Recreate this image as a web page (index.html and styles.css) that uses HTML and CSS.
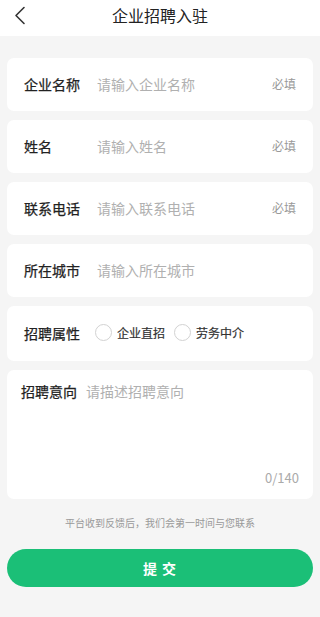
FILE: index.html
```html
<!DOCTYPE html>
<html lang="zh-CN">
<head>
<meta charset="utf-8">
<meta name="viewport" content="width=device-width, initial-scale=1">
<title>企业招聘入驻</title>
<link rel="stylesheet" href="styles.css">
</head>
<body>
<header class="topbar">
  <span class="back">
    <svg width="12" height="19" viewBox="0 0 12 19"><path d="M10 1.5 L2 9.5 L10 17.5" fill="none" stroke="#333" stroke-width="1.6" stroke-linecap="round" stroke-linejoin="round"/></svg>
  </span>
  <h1 class="title">企业招聘入驻</h1>
  <span></span>
</header>
<main class="form">
  <div class="card row">
    <span class="label">企业名称</span>
    <input class="field" placeholder="请输入企业名称">
    <span class="req">必填</span>
  </div>
  <div class="card row">
    <span class="label">姓名</span>
    <input class="field" placeholder="请输入姓名">
    <span class="req">必填</span>
  </div>
  <div class="card row">
    <span class="label">联系电话</span>
    <input class="field" placeholder="请输入联系电话">
    <span class="req">必填</span>
  </div>
  <div class="card row">
    <span class="label">所在城市</span>
    <input class="field" placeholder="请输入所在城市">
  </div>
  <div class="card row radio-row">
    <span class="label label-radio">招聘属性</span>
    <label class="opt"><span class="circle"></span><span>企业直招</span></label>
    <label class="opt"><span class="circle"></span><span>劳务中介</span></label>
  </div>
  <div class="card area">
    <div class="area-top">
      <span class="label">招聘意向</span>
      <span class="ph">请描述招聘意向</span>
    </div>
    <div class="count">0/140</div>
  </div>
  <p class="note">平台收到反馈后，我们会第一时间与您联系</p>
  <button class="submit">提 交</button>
</main>
</body>
</html>
```
FILE: styles.css
```css
* { box-sizing: border-box; }
html, body { margin: 0; padding: 0; }
body {
  width: 320px;
  min-height: 617px;
  background: #f5f5f5;
  font-family: "Noto Sans CJK SC", "Noto Sans", sans-serif;
  color: #333;
}
.topbar {
  height: 36px;
  background: #fff;
  display: grid;
  grid-template-columns: 40px 1fr 40px;
  align-items: center;
}
.back {
  display: flex;
  align-items: center;
  padding-left: 14px;
  height: 36px;
}
.back svg { display: block; margin-top: -5px; }
.title {
  margin: 0;
  text-align: center;
  font-size: 16px;
  font-weight: 400;
  color: #222;
  line-height: 20px;
  margin-top: -6px;
}
.form {
  padding: 22px 7px 0;
  display: flex;
  flex-direction: column;
  gap: 9px;
}
.card {
  background: #fff;
  border-radius: 7px;
}
.row {
  height: 53px;
  display: flex;
  align-items: center;
  padding: 0 17px 2px;
}
.label {
  width: 73px;
  flex: none;
  font-size: 14px;
  font-weight: 400;
  color: #222;
  line-height: 20px;
  -webkit-text-stroke: 0.25px #222;
}
.field {
  flex: 1;
  min-width: 0;
  border: 0;
  outline: 0;
  padding: 0;
  background: transparent;
  font: inherit;
  font-size: 14px;
  line-height: 20px;
  color: #333;
}
.field::placeholder { color: #b0b0b0; }
.req {
  font-size: 12px;
  color: #999;
  flex: none;
}
.radio-row { height: 55px; }
.label-radio { width: 71px; }
.opt {
  display: flex;
  align-items: center;
  gap: 5px;
  font-size: 12px;
  font-weight: 400;
  color: #333;
  margin-right: 9px;
  -webkit-text-stroke: 0.2px #333;
}
.circle {
  width: 17px;
  height: 17px;
  border: 1px solid #d2d2d2;
  border-radius: 50%;
  display: block;
}
.area {
  height: 129px;
  padding: 11px 14px 13px 14px;
  display: flex;
  flex-direction: column;
  justify-content: space-between;
}
.area-top {
  display: flex;
  align-items: center;
  gap: 9px;
}
.area .label { width: auto; }
.ph {
  font-size: 14px;
  color: #b0b0b0;
  line-height: 20px;
}
.count {
  text-align: right;
  font-size: 13px;
  color: #aaa;
  line-height: 16px;
}
.note {
  margin: 8px 0 0;
  text-align: center;
  font-size: 10px;
  line-height: 14px;
  color: #999;
}
.submit {
  margin-top: 10px;
  height: 38px;
  border: 0;
  border-radius: 19px;
  background: #1bbf77;
  color: #fff;
  font: inherit;
  font-size: 14px;
  font-weight: 700;
  letter-spacing: 1px;
  padding-bottom: 2px;
}
```
